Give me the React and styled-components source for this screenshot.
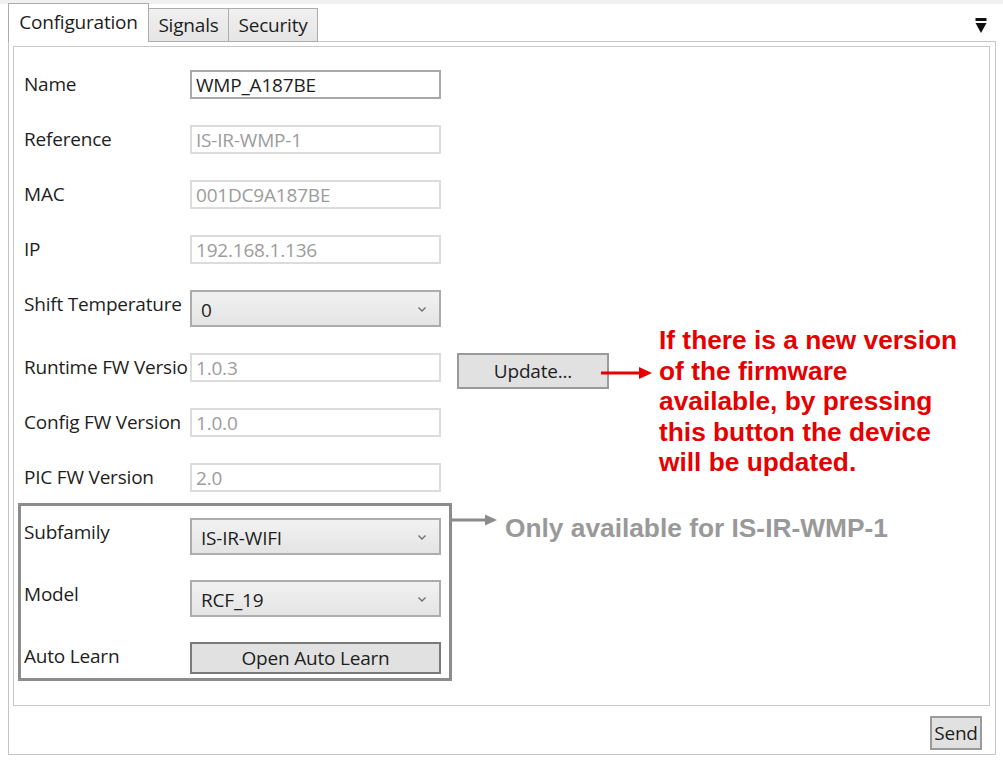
import styled, { createGlobalStyle } from "styled-components";

const GlobalStyle = createGlobalStyle`
  html, body {
    margin: 0;
    padding: 0;
    background: #ffffff;
  }
  body {
    font-family: "Open Sans", "Noto Sans", "Liberation Sans", sans-serif;
    color: #1e1e1e;
  }
`;

const Window = styled.div`
  position: relative;
  width: 1003px;
  height: 763px;
  overflow: hidden;
  background: #ffffff;
`;

const TopStrip = styled.div`
  height: 4px;
  background: #f0f0f0;
`;

const TabBar = styled.div`
  display: flex;
  align-items: flex-end;
  height: 38px;
  padding-left: 8px;
  margin-bottom: -1px;
  position: relative;
  z-index: 1;
`;

const Tab = styled.div`
  box-sizing: border-box;
  width: ${({ $w }) => $w};
  height: ${({ $active }) => ($active ? "39px" : "34px")};
  padding-bottom: ${({ $active }) => ($active ? "3px" : "0")};
  display: flex;
  align-items: center;
  justify-content: center;
  font-size: 19px;
  letter-spacing: -0.2px;
  color: #1e1e1e;
  border: 1px solid #acacac;
  border-bottom: ${({ $active }) => ($active ? "none" : "1px solid #acacac")};
  border-left: ${({ $first }) => ($first ? "1px solid #acacac" : "none")};
  background: ${({ $active }) =>
    $active ? "#ffffff" : "linear-gradient(#f0f0f0, #e5e5e5)"};
`;

const MenuGlyph = styled.div`
  margin-left: auto;
  margin-right: 16px;
  align-self: center;
  margin-top: 5px;
  display: flex;
`;

const Frame = styled.div`
  box-sizing: border-box;
  width: 988px;
  margin-left: 8px;
  border: 1px solid #c4c4c4;
  padding: 4px 5px 4px 4px;
`;

const Panel = styled.div`
  box-sizing: border-box;
  height: 660px;
  border: 1px solid #c8c8c8;
  padding: 23px 10px 0;
`;

const Form = styled.div`
  display: flex;
  flex-direction: column;
  gap: 26px;
`;

const Row = styled.div`
  display: flex;
  align-items: flex-start;
  height: ${({ $h }) => $h || "auto"};
`;

const Label = styled.div`
  width: 166px;
  flex: none;
  height: 29px;
  line-height: 29px;
  font-size: 19px;
  letter-spacing: -0.2px;
  white-space: nowrap;
  overflow: hidden;
  color: #1e1e1e;
`;

const TextField = styled.div`
  box-sizing: border-box;
  width: 251px;
  height: 29px;
  padding: 0 4px;
  display: flex;
  align-items: center;
  font-size: 19px;
  letter-spacing: -0.2px;
  border: 2px solid ${({ $disabled }) => ($disabled ? "#dcdcdc" : "#a9a9a9")};
  color: ${({ $disabled }) => ($disabled ? "#9c9c9c" : "#1e1e1e")};
  background: #ffffff;
  white-space: nowrap;
`;

const Combo = styled.div`
  box-sizing: border-box;
  width: 251px;
  height: 37px;
  padding: 2px 12px 0 9px;
  display: flex;
  align-items: center;
  justify-content: space-between;
  font-size: 19px;
  letter-spacing: -0.2px;
  color: #1e1e1e;
  border: 2px solid #acacac;
  background: linear-gradient(#f2f2f2, #e4e4e4);
`;

const Button = styled.div`
  box-sizing: border-box;
  flex: none;
  width: ${({ $w }) => $w};
  height: ${({ $h }) => $h};
  display: flex;
  align-items: center;
  justify-content: center;
  font-size: 19px;
  letter-spacing: -0.2px;
  color: #1e1e1e;
  background: #e1e1e1;
  border: 2px solid ${({ $dark }) => ($dark ? "#7a7a7a" : "#9a9a9a")};
  margin-left: ${({ $ml }) => $ml || "0"};
`;

const Highlight = styled.div`
  box-sizing: border-box;
  width: 434px;
  margin: 11px 0 0 -6px;
  padding: 12px 0 4px 3px;
  border: 3px solid #8c8c8c;
`;

const HighlightForm = styled(Form)`
  gap: 25px;
`;

const Footer = styled.div`
  display: flex;
  justify-content: flex-end;
  margin-top: 10px;
  padding-right: 8px;
`;

const Note = styled.div`
  position: absolute;
  left: ${({ $x }) => $x}px;
  top: ${({ $y }) => $y}px;
  font-family: "Liberation Sans", Arial, sans-serif;
  font-weight: bold;
  font-size: 26.3px;
  line-height: 30.5px;
  color: ${({ $color }) => $color};
  white-space: nowrap;
`;

const Arrow = styled.svg`
  position: absolute;
  left: ${({ $x }) => $x}px;
  top: ${({ $y }) => $y}px;
`;

const Chevron = () => (
  <svg width="10" height="7" viewBox="0 0 10 7">
    <polyline points="1.5,1.5 5,5 8.5,1.5" fill="none" stroke="#707070" strokeWidth="1.4" />
  </svg>
);

const fields = [
  { label: "Name", value: "WMP_A187BE" },
  { label: "Reference", value: "IS-IR-WMP-1", disabled: true },
  { label: "MAC", value: "001DC9A187BE", disabled: true },
  { label: "IP", value: "192.168.1.136", disabled: true },
];

// the runtime label is cut short by the label column in the app
const versions = [
  { label: "Runtime FW Versio", value: "1.0.3", update: true },
  { label: "Config FW Version", value: "1.0.0" },
  { label: "PIC FW Version", value: "2.0" },
];

export default function App() {
  return (
    <Window>
      <GlobalStyle />
      <TopStrip />
      <TabBar>
        <Tab $active $first $w="141px">Configuration</Tab>
        <Tab $w="80px">Signals</Tab>
        <Tab $w="89px">Security</Tab>
        <MenuGlyph>
          <svg width="12" height="16" viewBox="0 0 12 16">
            <rect x="0.5" y="0" width="11" height="3" fill="#111" />
            <polygon points="0.5,5 11.5,5 6,15" fill="#111" />
          </svg>
        </MenuGlyph>
      </TabBar>

      <Frame>
        <Panel>
          <Form>
            {fields.map((f) => (
              <Row key={f.label}>
                <Label>{f.label}</Label>
                <TextField $disabled={f.disabled}>{f.value}</TextField>
              </Row>
            ))}
            <Row>
              <Label>Shift Temperature</Label>
              <Combo>
                <span>0</span>
                <Chevron />
              </Combo>
            </Row>
            {versions.map((v) => (
              <Row key={v.label} $h="29px">
                <Label>{v.label}</Label>
                <TextField $disabled>{v.value}</TextField>
                {v.update && (
                  <Button $w="152px" $h="36px" $ml="16px">
                    Update...
                  </Button>
                )}
              </Row>
            ))}
          </Form>

          <Highlight>
            <HighlightForm>
              <Row>
                <Label>Subfamily</Label>
                <Combo>
                  <span>IS-IR-WIFI</span>
                  <Chevron />
                </Combo>
              </Row>
              <Row>
                <Label>Model</Label>
                <Combo>
                  <span>RCF_19</span>
                  <Chevron />
                </Combo>
              </Row>
              <Row>
                <Label>Auto Learn</Label>
                <Button $w="251px" $h="32px" $dark>
                  Open Auto Learn
                </Button>
              </Row>
            </HighlightForm>
          </Highlight>
        </Panel>
        <Footer>
          <Button $w="52px" $h="34px">Send</Button>
        </Footer>
      </Frame>

      <Arrow $x={601} $y={366} width="52" height="14" viewBox="0 0 52 14">
        <line x1="0" y1="7" x2="40" y2="7" stroke="#e60000" strokeWidth="3" />
        <polygon points="38,1 51,7 38,13" fill="#e60000" />
      </Arrow>
      <Note $x={659} $y={325} $color="#e60000">
        If there is a new version
        <br />
        of the firmware
        <br />
        available, by pressing
        <br />
        this button the device
        <br />
        will be updated.
      </Note>

      <Arrow $x={451} $y={513} width="48" height="14" viewBox="0 0 48 14">
        <line x1="0" y1="7" x2="36" y2="7" stroke="#8c8c8c" strokeWidth="3" />
        <polygon points="34,1.5 46,7 34,12.5" fill="#8c8c8c" />
      </Arrow>
      <Note $x={505} $y={513} $color="#999999">
        Only available for IS-IR-WMP-1
      </Note>
    </Window>
  );
}
